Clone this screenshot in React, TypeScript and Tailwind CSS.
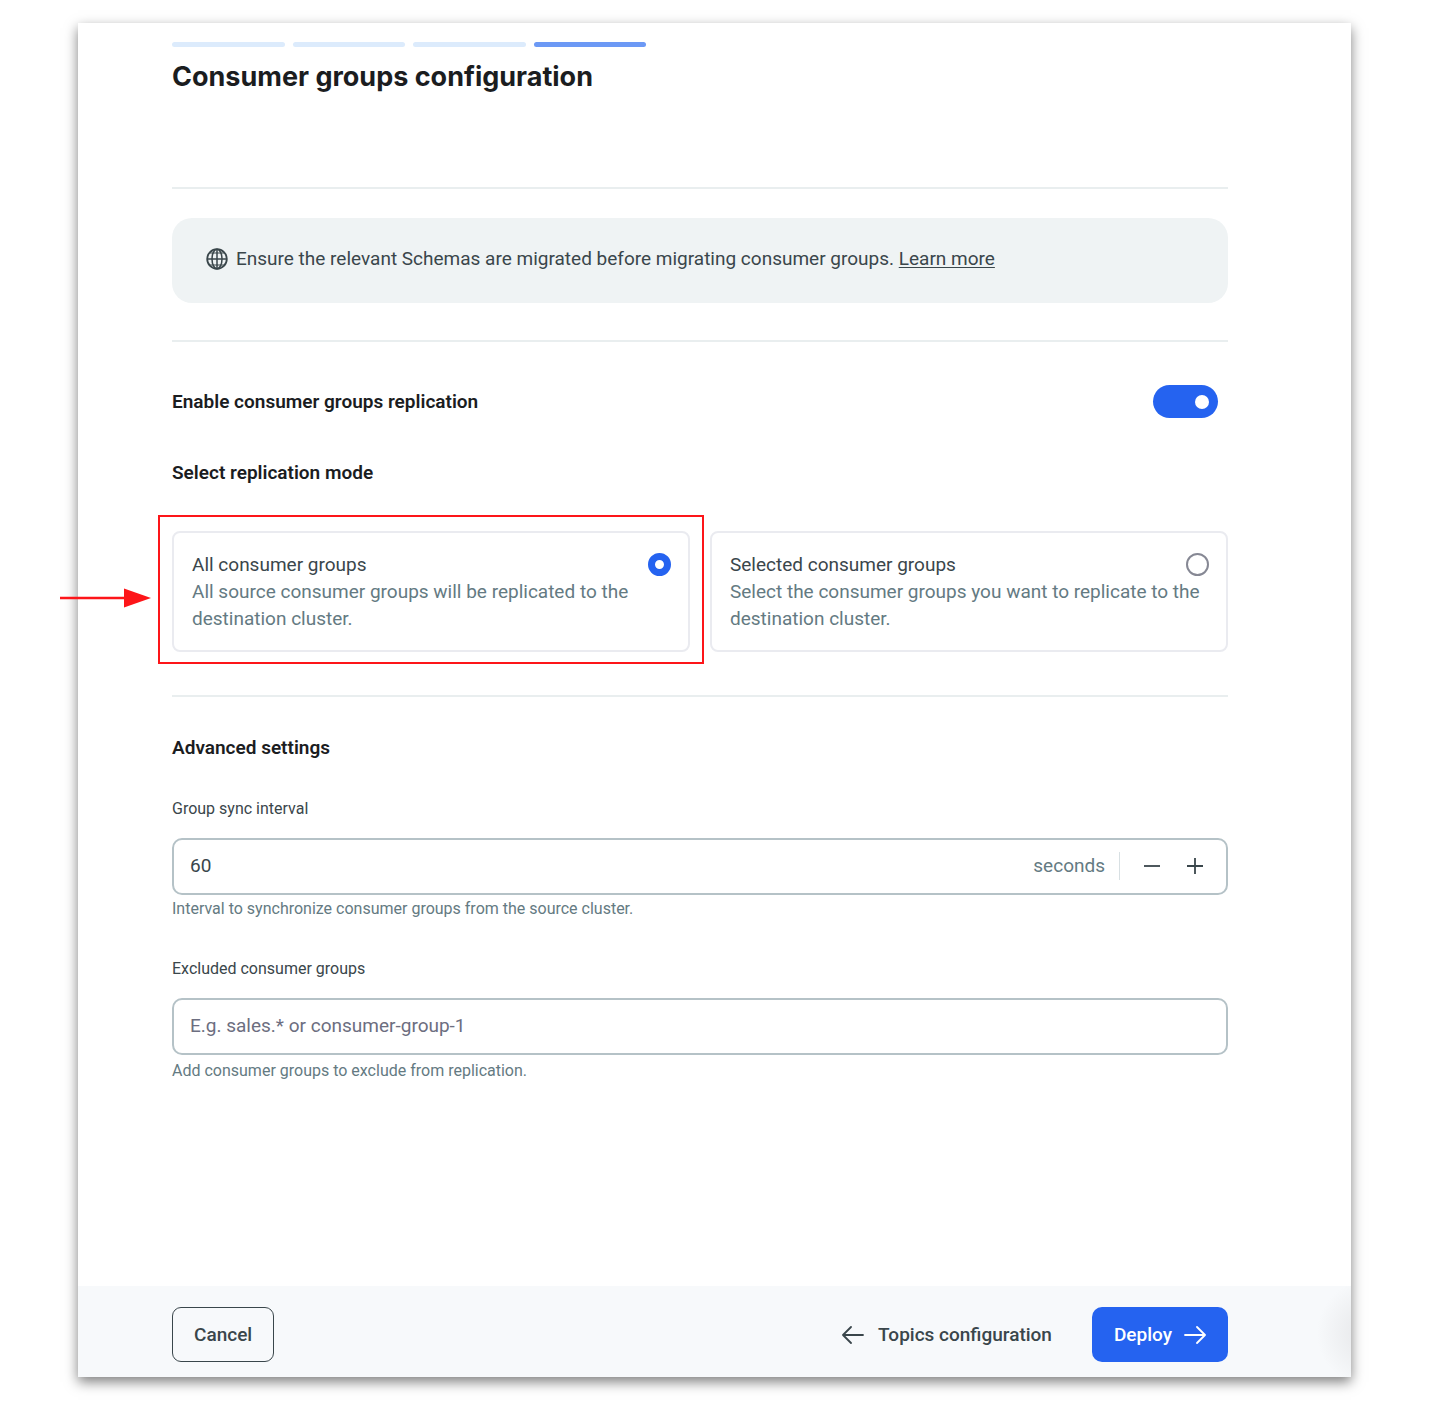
import React, { useState } from 'react';

type Mode = 'all' | 'selected';

const modes: { id: Mode; title: string; description: string }[] = [
  {
    id: 'all',
    title: 'All consumer groups',
    description: 'All source consumer groups will be replicated to the destination cluster.',
  },
  {
    id: 'selected',
    title: 'Selected consumer groups',
    description: 'Select the consumer groups you want to replicate to the destination cluster.',
  },
];

const GlobeIcon = () => (
  <svg viewBox="0 0 22 22" className="h-[22px] w-[22px] shrink-0" fill="none" stroke="currentColor" strokeWidth="1.8" aria-hidden="true">
    <circle cx="11" cy="11" r="9.8" />
    <ellipse cx="11" cy="11" rx="5" ry="9.8" strokeWidth="1.5" />
    <path d="M11 1.2v19.6M1.2 11h19.6" strokeWidth="1.5" />
    <path d="M3.6 5h14.8M3.6 17h14.8" strokeWidth="1.1" />
  </svg>
);

const ArrowIcon = ({ className = '' }: { className?: string }) => (
  <svg viewBox="0 0 22 18" className={`h-[18px] w-[22px] shrink-0 ${className}`} fill="none" stroke="currentColor" strokeWidth="1.8" strokeLinecap="round" strokeLinejoin="round" aria-hidden="true">
    <path d="M1 9h19.8M13 1l8 8-8 8" />
  </svg>
);

// Red frame and pointer drawn over the highlighted option
const Highlight = () => (
  <>
    <div className="pointer-events-none absolute -top-4 -right-3.5 -bottom-3 -left-3.5 border-2 border-[#fd1519]" />
    <svg viewBox="0 0 91 20" className="pointer-events-none absolute top-[57px] right-full mr-[21px] h-5 w-[91px]" aria-hidden="true">
      <path d="M0 10h70" stroke="#fd1519" strokeWidth="2.4" />
      <path d="M64 0.5L91 10L64 19.5z" fill="#fd1519" />
    </svg>
  </>
);

const Divider = () => <hr className="border-t-2 border-[#e9eeef]" />;

const App = () => {
  const [enabled, setEnabled] = useState(true);
  const [mode, setMode] = useState<Mode>('all');
  const [interval, setInterval] = useState(60);
  const [excluded, setExcluded] = useState('');

  return (
    <div className="min-h-screen bg-white pt-[23px] pr-[90px] pb-[34px] pl-[78px] font-['Roboto',sans-serif] text-[19px] leading-[27px] text-[#3a464b]">
      <div className="bg-white shadow-[0_5px_12px_rgba(0,0,0,0.5)]">
        <main className="pt-[19px] pr-[123px] pb-[203px] pl-[94px]">
          {/* Step progress */}
          <div className="grid w-[474px] grid-cols-4 gap-2">
            <div className="h-[5px] rounded-full bg-[#dcebfc]" />
            <div className="h-[5px] rounded-full bg-[#dcebfc]" />
            <div className="h-[5px] rounded-full bg-[#dcebfc]" />
            <div className="h-[5px] rounded-full bg-[#6c99f5]" />
          </div>

          <h1 className="mt-3 mb-[92px] font-['Inter',sans-serif] text-[27px] leading-9 font-bold text-[#1b1d1f]">
            Consumer groups configuration
          </h1>

          <Divider />

          <div className="mt-[29px] mb-[37px] flex items-center gap-2 rounded-[20px] bg-[#eff3f4] px-[34px] pt-[27px] pb-[31px]">
            <GlobeIcon />
            <p>
              Ensure the relevant Schemas are migrated before migrating consumer groups.{' '}
              <a href="#" className="underline underline-offset-2">Learn more</a>
            </p>
          </div>

          <Divider />

          <div className="mt-[43px] flex items-center justify-between pr-2.5 text-[#1b1d1f]">
            <label htmlFor="replication" className="font-semibold">Enable consumer groups replication</label>
            <input
              id="replication"
              type="checkbox"
              role="switch"
              checked={enabled}
              onChange={(e) => setEnabled(e.target.checked)}
              className="flex h-[33px] w-[65px] appearance-none items-center rounded-full bg-gray-300 px-[9px] before:h-3.5 before:w-3.5 before:rounded-full before:bg-white checked:justify-end checked:bg-[#2563f0]"
            />
          </div>

          <fieldset className="mt-[41px] mb-[43px]">
            <legend className="mb-[45px] font-semibold text-[#1b1d1f]">Select replication mode</legend>
            <div className="grid grid-cols-2 gap-5">
              {modes.map((m) => (
                <div key={m.id} className="relative">
                  <label className="block rounded-lg border-2 border-[#eaebf0] py-[18px] pr-[17px] pl-[18px]">
                    <span className="flex items-center justify-between">
                      {m.title}
                      <input
                        type="radio"
                        name="mode"
                        checked={mode === m.id}
                        onChange={() => setMode(m.id)}
                        className="h-[23px] w-[23px] appearance-none rounded-full border-2 border-[#868894] bg-white checked:border-[7px] checked:border-[#2563f0]"
                      />
                    </span>
                    <span className="block text-[#647a82]">{m.description}</span>
                  </label>
                  {m.id === 'all' && <Highlight />}
                </div>
              ))}
            </div>
          </fieldset>

          <Divider />

          <h2 className="mt-[37px] font-semibold text-[#1b1d1f]">Advanced settings</h2>

          <div className="mt-9 text-[16px] leading-6">
            <label htmlFor="interval" className="block">Group sync interval</label>
            <div className="mt-[17px] mb-0.5 flex h-[57px] items-center rounded-[10px] border-2 border-[#b5c2c7] pr-2.5 pb-0.5 text-[19px]">
              <input
                id="interval"
                inputMode="numeric"
                value={interval}
                onChange={(e) => setInterval(Number(e.target.value) || 0)}
                className="h-full min-w-0 flex-1 bg-transparent px-4 outline-none"
              />
              <span className="text-[#647a82]">seconds</span>
              <span className="mr-2.5 ml-3.5 h-7 w-px bg-[#d8e0e3]" />
              <button type="button" aria-label="Decrease" onClick={() => setInterval(interval - 1)} className="flex h-10 w-[43px] items-center justify-center">
                <svg viewBox="0 0 16 16" className="h-4 w-4" stroke="currentColor" strokeWidth="1.8"><path d="M0 8h16" /></svg>
              </button>
              <button type="button" aria-label="Increase" onClick={() => setInterval(interval + 1)} className="flex h-10 w-[43px] items-center justify-center">
                <svg viewBox="0 0 16 16" className="h-4 w-4" stroke="currentColor" strokeWidth="1.8"><path d="M0 8h16M8 0v16" /></svg>
              </button>
            </div>
            <p className="text-[#647a82]">Interval to synchronize consumer groups from the source cluster.</p>
          </div>

          <div className="mt-9 text-[16px] leading-6">
            <label htmlFor="excluded" className="block">Excluded consumer groups</label>
            <input
              id="excluded"
              type="text"
              placeholder="E.g. sales.* or consumer-group-1"
              value={excluded}
              onChange={(e) => setExcluded(e.target.value)}
              className="mt-[17px] mb-1 block h-[57px] w-full rounded-[10px] border-2 border-[#b5c2c7] px-4 pb-0.5 text-[19px] outline-none placeholder:text-[#6c6e80]"
            />
            <p className="text-[#647a82]">Add consumer groups to exclude from replication.</p>
          </div>
        </main>

        <footer className="flex items-center justify-between bg-[#f7f9fb] bg-[radial-gradient(circle_at_calc(100%+20px)_52%,#e4e5e7,#f7f9fb_54px)] pt-[21px] pr-[123px] pb-[15px] pl-[94px] font-medium">
          <button type="button" className="h-[55px] rounded-[9px] border border-[#3a464b] px-[21px]">Cancel</button>
          <div className="flex items-center gap-10">
            <button type="button" className="flex items-center gap-3.5">
              <ArrowIcon className="rotate-180" />
              Topics configuration
            </button>
            <button type="button" className="flex h-[55px] items-center gap-3 rounded-[10px] bg-[#2563f0] px-[22px] text-white">
              Deploy
              <ArrowIcon />
            </button>
          </div>
        </footer>
      </div>
    </div>
  );
};

export default App;
